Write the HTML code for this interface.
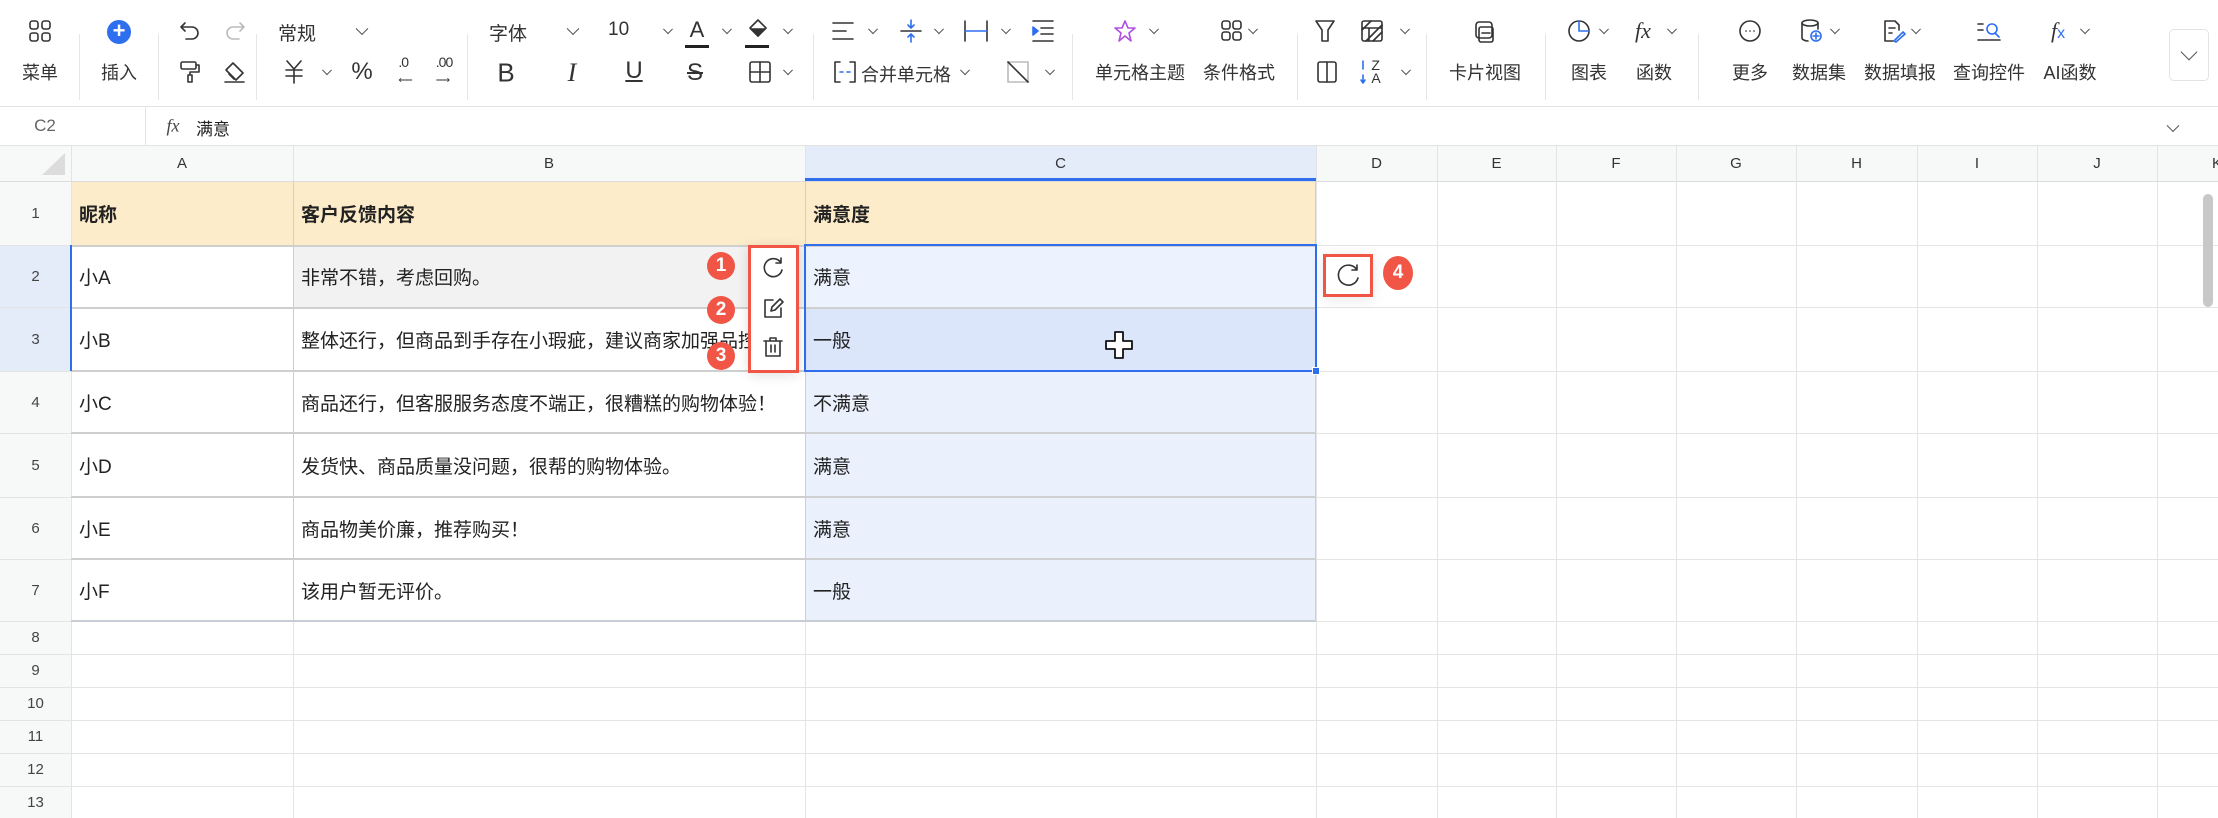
<!DOCTYPE html>
<html><head><meta charset="utf-8"><style>
*{margin:0;padding:0;box-sizing:border-box}
body{width:2218px;height:818px;overflow:hidden;background:#fff;font-family:"Liberation Sans","Noto Sans CJK SC",sans-serif;color:#222;position:relative}
.a{position:absolute}
.c{position:absolute;transform:translate(-50%,-50%);white-space:nowrap}
.lbl{font-size:18px;color:#333}
.sep{position:absolute;top:34px;width:1px;height:66px;background:#e6e6e6}
svg{position:absolute;overflow:visible}
svg *{fill:none;stroke:#333;stroke-width:1.6;stroke-linecap:round;stroke-linejoin:round}
.chev{position:absolute;width:9px;height:9px;border-right:1.6px solid #555;border-bottom:1.6px solid #555;transform:translate(-50%,-75%) rotate(45deg)}
.vl{position:absolute;width:1px;background:#e4e4e4;top:146px;height:672px}
.hl{position:absolute;height:1px;background:#e4e4e4;left:0;width:2218px}
.cell{position:absolute;font-size:19px;display:flex;align-items:center;padding-left:8px;white-space:nowrap;overflow:hidden}
.rn{position:absolute;left:0;width:71px;font-size:15px;color:#444;display:flex;align-items:center;justify-content:center}
.ch{position:absolute;top:146px;height:35px;font-size:15px;color:#333;display:flex;align-items:center;justify-content:center}
.badge{position:absolute;width:28px;height:28px;border-radius:50%;background:#f05545;color:#fff;font-weight:bold;font-size:19px;display:flex;align-items:center;justify-content:center;transform:translate(-50%,-50%)}
</style></head><body>

<!-- toolbar -->
<div class="a" style="left:0;top:106px;width:2218px;height:1px;background:#e3e3e3"></div>
<svg style="left:30px;top:21px" width="20" height="20"><rect x="0" y="0" width="8" height="8" rx="2.5"/><rect x="12" y="0" width="8" height="8" rx="2.5"/><rect x="0" y="12" width="8" height="8" rx="2.5"/><rect x="12" y="12" width="8" height="8" rx="2.5"/></svg>
<div class="c lbl" style="left:40px;top:72px">菜单</div>
<div class="sep" style="left:79px"></div>
<div class="a" style="left:107px;top:20px;width:24px;height:24px;border-radius:50%;background:#2e6ff0"></div>
<div class="c" style="left:119px;top:31px;color:#fff;font-size:22px;font-weight:bold">+</div>
<div class="c lbl" style="left:119px;top:72px">插入</div>
<div class="sep" style="left:158px"></div>
<svg style="left:180px;top:21px" width="20" height="20"><path d="M5 2 L1 6 L5 10 M1 6 H12 a6 6 0 0 1 0 12 H6"/></svg>
<svg style="left:225px;top:21px" width="20" height="20"><path style="stroke:#bbb" d="M15 2 L19 6 L15 10 M19 6 H8 a6 6 0 0 0 0 12 H14"/></svg>
<svg style="left:180px;top:61px" width="20" height="22"><rect x="1" y="1" width="15" height="7" rx="1.5"/><path d="M16 4h3v7h-9v3 M8 14h4v7h-4z"/></svg>
<svg style="left:224px;top:61px" width="22" height="22"><path d="M9 2 L19 12 L12 19 L2 9 Z M5 13 L10 18 M1 21 H20"/></svg>
<div class="sep" style="left:256px"></div>
<div class="a lbl" style="left:278px;top:19px;font-size:19px">常规</div>
<div class="chev" style="left:362px;top:31px"></div>
<svg style="left:284px;top:60px" width="20" height="24"><path d="M3 1 L10 9 L17 1 M2 10 H18 M2 16 H18 M10 9 V23"/></svg>
<div class="chev" style="left:327px;top:72px;width:7px;height:7px"></div>
<div class="c" style="left:362px;top:72px;font-size:24px;color:#333">%</div>
<div class="c" style="left:405px;top:70px;font-size:14px;color:#333;letter-spacing:-1px">.0<br><span style="font-size:10px">⟵</span></div>
<div class="c" style="left:444px;top:70px;font-size:14px;color:#333;letter-spacing:-1px">.00<br><span style="font-size:10px">⟶</span></div>
<div class="sep" style="left:467px"></div>
<div class="a lbl" style="left:489px;top:19px;font-size:19px">字体</div>
<div class="chev" style="left:573px;top:31px"></div>
<div class="a lbl" style="left:608px;top:19px;font-size:19px">10</div>
<div class="chev" style="left:668px;top:31px;width:7px;height:7px"></div>
<div class="c" style="left:697px;top:30px;font-size:22px;color:#333">A</div>
<div class="a" style="left:685px;top:45px;width:24px;height:3px;background:#222"></div>
<div class="chev" style="left:727px;top:31px;width:7px;height:7px"></div>
<svg style="left:748px;top:19px" width="22" height="22"><path d="M10 1 L18 9 L10 17 L2 9 Z"/><path d="M3 10 H17 L10 17 Z" style="fill:#333"/></svg>
<div class="a" style="left:745px;top:45px;width:24px;height:3px;background:#222"></div>
<div class="chev" style="left:788px;top:31px;width:7px;height:7px"></div>
<div class="c" style="left:506px;top:73px;font-size:26px;color:#333">B</div>
<div class="c" style="left:572px;top:73px;font-size:26px;color:#333;font-style:italic;font-family:'Liberation Serif',serif">I</div>
<div class="c" style="left:634px;top:71px;font-size:24px;color:#333;text-decoration:underline">U</div>
<div class="c" style="left:695px;top:73px;font-size:24px;color:#333;text-decoration:line-through">S</div>
<svg style="left:749px;top:61px" width="22" height="22"><rect x="1" y="1" width="20" height="20" rx="2"/><path d="M11 1V21 M1 11H21"/></svg>
<div class="chev" style="left:788px;top:72px;width:7px;height:7px"></div>
<div class="sep" style="left:813px"></div>
<svg style="left:832px;top:21px" width="22" height="22"><path d="M1 2H21 M1 10H14 M1 18H21"/></svg>
<div class="chev" style="left:873px;top:31px;width:7px;height:7px"></div>
<svg style="left:900px;top:19px" width="22" height="26"><path d="M1 12H21"/><path style="stroke:#2e6ff0" d="M11 1V9 M8 6L11 9L14 6 M11 23V15 M8 18L11 15L14 18"/></svg>
<div class="chev" style="left:939px;top:31px;width:7px;height:7px"></div>
<svg style="left:964px;top:20px" width="24" height="22"><path d="M1 1V21 M23 1V21"/><path style="stroke:#2e6ff0" d="M1 11H23"/></svg>
<div class="chev" style="left:1006px;top:31px;width:7px;height:7px"></div>
<svg style="left:1032px;top:20px" width="22" height="22"><path d="M1 1H21 M9 8H21 M9 14H21 M1 21H21"/><path style="fill:#2e6ff0;stroke:#2e6ff0" d="M1 7L6 11L1 15Z"/></svg>
<svg style="left:834px;top:61px" width="22" height="22"><path d="M6 1H1V21H6 M16 1H21V21H16"/><path style="stroke:#2e6ff0" d="M6 11H9 M13 11H16"/></svg>
<div class="a lbl" style="left:861px;top:61px">合并单元格</div>
<div class="chev" style="left:965px;top:72px;width:7px;height:7px"></div>
<svg style="left:1007px;top:61px" width="22" height="22"><rect style="stroke:#bbb" x="1" y="1" width="20" height="20"/><path d="M1 1L21 21"/></svg>
<div class="chev" style="left:1050px;top:72px;width:7px;height:7px"></div>
<div class="sep" style="left:1072px"></div>
<svg style="left:1114px;top:20px" width="22" height="22"><path style="stroke:#b050e0" d="M11 1L14 8L21 8L15 13L17 21L11 16L5 21L7 13L1 8L8 8Z"/></svg>
<div class="chev" style="left:1154px;top:31px;width:7px;height:7px"></div>
<svg style="left:1221px;top:20px" width="22" height="22"><rect x="1" y="1" width="8" height="8" rx="2.5"/><rect x="12" y="1" width="8" height="8" rx="2.5"/><rect x="1" y="12" width="8" height="8" rx="2.5"/><rect x="12" y="12" width="8" height="8" rx="2.5"/></svg>
<div class="chev" style="left:1253px;top:31px;width:7px;height:7px"></div>
<div class="c lbl" style="left:1140px;top:72px">单元格主题</div>
<div class="c lbl" style="left:1239px;top:72px">条件格式</div>
<div class="sep" style="left:1297px"></div>
<svg style="left:1315px;top:20px" width="20" height="22"><path d="M1 1H19L13 10V21H7V10Z"/></svg>
<svg style="left:1361px;top:20px" width="22" height="22"><rect x="1" y="1" width="20" height="20" rx="2"/><path d="M1 10L10 1 M5 21L21 5 M12 21L21 12 M8 8V21 M1 8H21"/></svg>
<div class="chev" style="left:1405px;top:31px;width:7px;height:7px"></div>
<svg style="left:1317px;top:61px" width="20" height="22"><rect x="1" y="1" width="18" height="20" rx="2"/><path d="M10 1V21"/></svg>
<div class="c" style="left:1376px;top:72px;font-size:14px;line-height:13px;color:#333">Z<br>A</div>
<svg style="left:1360px;top:60px" width="6" height="24"><path style="stroke:#2e6ff0" d="M3 1V9 M3 15V23 M1 20L3 23L5 20"/></svg>
<div class="chev" style="left:1406px;top:72px;width:7px;height:7px"></div>
<div class="sep" style="left:1426px"></div>
<svg style="left:1473px;top:21px" width="22" height="22"><rect x="3" y="1" width="16" height="16" rx="3"/><rect x="6" y="6" width="14" height="15" rx="2"/><path d="M9 12H17"/></svg>
<div class="c lbl" style="left:1485px;top:72px">卡片视图</div>
<div class="sep" style="left:1545px"></div>
<svg style="left:1568px;top:20px" width="22" height="22"><circle cx="11" cy="11" r="10"/><path style="stroke:#2e6ff0" d="M11 1V11H21"/></svg>
<div class="chev" style="left:1604px;top:31px;width:7px;height:7px"></div>
<div class="c" style="left:1643px;top:31px;font-size:22px;font-style:italic;color:#333;font-family:'Liberation Serif',serif">fx</div>
<div class="chev" style="left:1672px;top:31px;width:7px;height:7px"></div>
<div class="c lbl" style="left:1589px;top:72px">图表</div>
<div class="c lbl" style="left:1654px;top:72px">函数</div>
<div class="sep" style="left:1698px"></div>
<svg style="left:1739px;top:20px" width="22" height="22"><circle cx="11" cy="11" r="10"/><path d="M7 11h.1 M11 11h.1 M15 11h.1"/></svg>
<svg style="left:1800px;top:19px" width="24" height="24"><ellipse cx="10" cy="4" rx="8" ry="3"/><path d="M2 4V19c0 2 4 3 6 3 M18 4V10"/><circle style="stroke:#2e6ff0" cx="16" cy="17" r="5"/><path style="stroke:#2e6ff0" d="M16 14V20 M13 17H19"/></svg>
<div class="chev" style="left:1835px;top:31px;width:7px;height:7px"></div>
<svg style="left:1883px;top:19px" width="24" height="24"><path d="M10 22H2V2H12L16 6V11 M6 9H12 M6 14H9"/><path style="stroke:#2e6ff0" d="M11 22L20 13L22 15L13 23Z"/></svg>
<div class="chev" style="left:1916px;top:31px;width:7px;height:7px"></div>
<svg style="left:1977px;top:20px" width="24" height="24"><path d="M1 4H6 M1 10H6 M1 20H23"/><circle style="stroke:#2e6ff0" cx="15" cy="9" r="5"/><path style="stroke:#2e6ff0" d="M18 13L22 17"/></svg>
<div class="c" style="left:2058px;top:31px;font-size:22px;font-style:italic;color:#333;font-family:'Liberation Serif',serif">f<span style="color:#2e6ff0;font-style:normal;font-size:16px;font-family:'Liberation Sans'">x</span></div>
<div class="chev" style="left:2085px;top:31px;width:7px;height:7px"></div>
<div class="c lbl" style="left:1750px;top:72px">更多</div>
<div class="c lbl" style="left:1819px;top:72px">数据集</div>
<div class="c lbl" style="left:1900px;top:72px">数据填报</div>
<div class="c lbl" style="left:1989px;top:72px">查询控件</div>
<div class="c lbl" style="left:2070px;top:72px">AI函数</div>
<div class="a" style="left:2169px;top:29px;width:40px;height:52px;border:1px solid #e3e3e3;border-radius:5px"></div>
<div class="chev" style="left:2189px;top:55px;width:12px;height:12px"></div>

<!-- formula bar -->
<div class="c" style="left:45px;top:126px;font-size:17px;color:#666">C2</div>
<div class="a" style="left:145px;top:107px;width:1px;height:38px;background:#e3e3e3"></div>
<div class="c" style="left:173px;top:126px;font-size:18px;font-style:italic;color:#444;font-family:'Liberation Serif',serif">fx</div>
<div class="a" style="left:196px;top:115px;font-size:17px;color:#222">满意</div>
<div class="chev" style="left:2173px;top:128px"></div>
<div class="a" style="left:0;top:145px;width:2218px;height:1px;background:#e3e3e3"></div>

<!-- header backgrounds -->
<div class="a" style="left:0;top:146px;width:2218px;height:35px;background:#f7f8f8"></div>
<div class="a" style="left:0;top:181px;width:71px;height:637px;background:#f7f8f8"></div>
<div class="a" style="left:805px;top:146px;width:511px;height:35px;background:#e4ebf9"></div>
<div class="a" style="left:0;top:245px;width:71px;height:126px;background:#e4ebf9"></div>
<svg style="left:40px;top:152px" width="26" height="24"><path style="fill:#dcdcdc;stroke:none" d="M25 1V23H2Z"/></svg>

<!-- cell backgrounds -->
<div class="a" style="left:71px;top:181px;width:1245px;height:64px;background:#fdecc9"></div>
<div class="a" style="left:293px;top:245px;width:512px;height:62px;background:#f2f2f2"></div>
<div class="a" style="left:805px;top:245px;width:511px;height:62px;background:#ecf2fe"></div>
<div class="a" style="left:805px;top:307px;width:511px;height:64px;background:#dbe6fb"></div>
<div class="a" style="left:805px;top:371px;width:511px;height:250px;background:#eaf1fd"></div>

<!-- grid lines -->
<div class="vl" style="left:71px"></div><div class="vl" style="left:293px"></div><div class="vl" style="left:805px"></div><div class="vl" style="left:1316px"></div><div class="vl" style="left:1437px"></div><div class="vl" style="left:1556px"></div><div class="vl" style="left:1676px"></div><div class="vl" style="left:1796px"></div><div class="vl" style="left:1917px"></div><div class="vl" style="left:2037px"></div><div class="vl" style="left:2157px"></div>
<div class="hl" style="top:181px;background:#dcdcdc"></div><div class="hl" style="top:245px"></div><div class="hl" style="top:307px"></div><div class="hl" style="top:371px"></div><div class="hl" style="top:433px"></div><div class="hl" style="top:497px"></div><div class="hl" style="top:559px"></div><div class="hl" style="top:621px"></div><div class="hl" style="top:654px"></div><div class="hl" style="top:687px"></div><div class="hl" style="top:720px"></div><div class="hl" style="top:753px"></div><div class="hl" style="top:786px"></div>
<div class="a" style="left:71px;top:245px;width:1245px;height:2px;background:#cfcfcf"></div>
<div class="a" style="left:71px;top:307px;width:1245px;height:2px;background:#cfcfcf"></div>
<div class="a" style="left:71px;top:370px;width:1245px;height:2px;background:#cfcfcf"></div>
<div class="a" style="left:71px;top:432px;width:1245px;height:2px;background:#cfcfcf"></div>
<div class="a" style="left:71px;top:496px;width:1245px;height:2px;background:#cfcfcf"></div>
<div class="a" style="left:71px;top:558px;width:1245px;height:2px;background:#cfcfcf"></div>
<div class="a" style="left:71px;top:620px;width:1245px;height:2px;background:#c8ccd4"></div>
<div class="a" style="left:293px;top:181px;width:1px;height:440px;background:#cfcfcf"></div>
<div class="a" style="left:805px;top:181px;width:1px;height:440px;background:#cfcfcf"></div>
<div class="a" style="left:1315px;top:181px;width:1px;height:440px;background:#cfcfcf"></div>

<!-- column headers -->
<div class="ch" style="left:71px;width:222px">A</div><div class="ch" style="left:293px;width:512px">B</div><div class="ch" style="left:805px;width:511px">C</div><div class="ch" style="left:1316px;width:121px">D</div><div class="ch" style="left:1437px;width:119px">E</div><div class="ch" style="left:1556px;width:120px">F</div><div class="ch" style="left:1676px;width:120px">G</div><div class="ch" style="left:1796px;width:121px">H</div><div class="ch" style="left:1917px;width:120px">I</div><div class="ch" style="left:2037px;width:120px">J</div><div class="ch" style="left:2157px;width:120px">K</div>
<div class="a" style="left:805px;top:178px;width:511px;height:3px;background:#2f6fed"></div>

<!-- row numbers -->
<div class="rn" style="top:181px;height:64px">1</div><div class="rn" style="top:245px;height:62px">2</div><div class="rn" style="top:307px;height:64px">3</div><div class="rn" style="top:371px;height:62px">4</div><div class="rn" style="top:433px;height:64px">5</div><div class="rn" style="top:497px;height:62px">6</div><div class="rn" style="top:559px;height:62px">7</div><div class="rn" style="top:621px;height:33px">8</div><div class="rn" style="top:654px;height:33px">9</div><div class="rn" style="top:687px;height:33px">10</div><div class="rn" style="top:720px;height:33px">11</div><div class="rn" style="top:753px;height:33px">12</div><div class="rn" style="top:786px;height:32px">13</div>

<!-- cells -->
<div class="cell" style="left:71px;top:181px;width:222px;height:64px;font-weight:bold">昵称</div>
<div class="cell" style="left:293px;top:181px;width:512px;height:64px;font-weight:bold">客户反馈内容</div>
<div class="cell" style="left:805px;top:181px;width:511px;height:64px;font-weight:bold">满意度</div>
<div class="cell" style="left:71px;top:245px;width:222px;height:62px">小A</div>
<div class="cell" style="left:293px;top:245px;width:512px;height:62px">非常不错，考虑回购。</div>
<div class="cell" style="left:805px;top:245px;width:511px;height:62px">满意</div>
<div class="cell" style="left:71px;top:307px;width:222px;height:64px">小B</div>
<div class="cell" style="left:293px;top:307px;width:512px;height:64px">整体还行，但商品到手存在小瑕疵，建议商家加强品控。</div>
<div class="cell" style="left:805px;top:307px;width:511px;height:64px">一般</div>
<div class="cell" style="left:71px;top:371px;width:222px;height:62px">小C</div>
<div class="cell" style="left:293px;top:371px;width:512px;height:62px">商品还行，但客服服务态度不端正，很糟糕的购物体验！</div>
<div class="cell" style="left:805px;top:371px;width:511px;height:62px">不满意</div>
<div class="cell" style="left:71px;top:433px;width:222px;height:64px">小D</div>
<div class="cell" style="left:293px;top:433px;width:512px;height:64px">发货快、商品质量没问题，很帮的购物体验。</div>
<div class="cell" style="left:805px;top:433px;width:511px;height:64px">满意</div>
<div class="cell" style="left:71px;top:497px;width:222px;height:62px">小E</div>
<div class="cell" style="left:293px;top:497px;width:512px;height:62px">商品物美价廉，推荐购买！</div>
<div class="cell" style="left:805px;top:497px;width:511px;height:62px">满意</div>
<div class="cell" style="left:71px;top:559px;width:222px;height:62px">小F</div>
<div class="cell" style="left:293px;top:559px;width:512px;height:62px">该用户暂无评价。</div>
<div class="cell" style="left:805px;top:559px;width:511px;height:62px">一般</div>

<!-- selection -->
<div class="a" style="left:70px;top:245px;width:2px;height:126px;background:#2f6fed"></div>
<div class="a" style="left:804px;top:244px;width:513px;height:128px;border:2px solid #2f6fed"></div>
<div class="a" style="left:1312px;top:367px;width:8px;height:8px;background:#2f6fed;border:1px solid #fff"></div>

<!-- floating toolbar -->
<div class="a" style="left:748px;top:245px;width:51px;height:128px;background:#fff;border:3px solid #f05545;box-shadow:0 2px 12px rgba(0,0,0,.12)"></div>
<svg style="left:762px;top:257px" width="22" height="22"><path d="M19 6A9 9 0 1 0 20 13 M19 1V6H14"/></svg>
<svg style="left:762px;top:297px" width="22" height="22"><path d="M11 3H3V20H19V11 M9 14L10 10L18 2L21 5L13 13Z"/></svg>
<svg style="left:763px;top:336px" width="20" height="22"><path d="M1 5H19 M7 5V2H13V5 M3 5V20H17V5 M8 9V16 M12 9V16"/></svg>
<div class="badge" style="left:721px;top:266px">1</div>
<div class="badge" style="left:721px;top:310px">2</div>
<div class="badge" style="left:721px;top:356px">3</div>

<div class="a" style="left:1323px;top:254px;width:50px;height:43px;background:#fff;border:3px solid #f05545;box-shadow:0 2px 14px rgba(0,0,0,.1)"></div>
<svg style="left:1336px;top:264px" width="24" height="24"><path d="M21 6A10 10 0 1 0 22 14 M21 1V6H16"/></svg>
<div class="badge" style="left:1398px;top:273px;width:30px;height:34px">4</div>

<!-- cursor -->
<svg style="left:1105px;top:331px" width="28" height="28"><path style="fill:#fff;stroke:#111;stroke-width:1.8" d="M10 1H18V10H27V18H18V27H10V18H1V10H10Z"/></svg>

<!-- scrollbar -->
<div class="a" style="left:2203px;top:194px;width:10px;height:113px;border-radius:5px;background:#c8c8c8"></div>
</body></html>
